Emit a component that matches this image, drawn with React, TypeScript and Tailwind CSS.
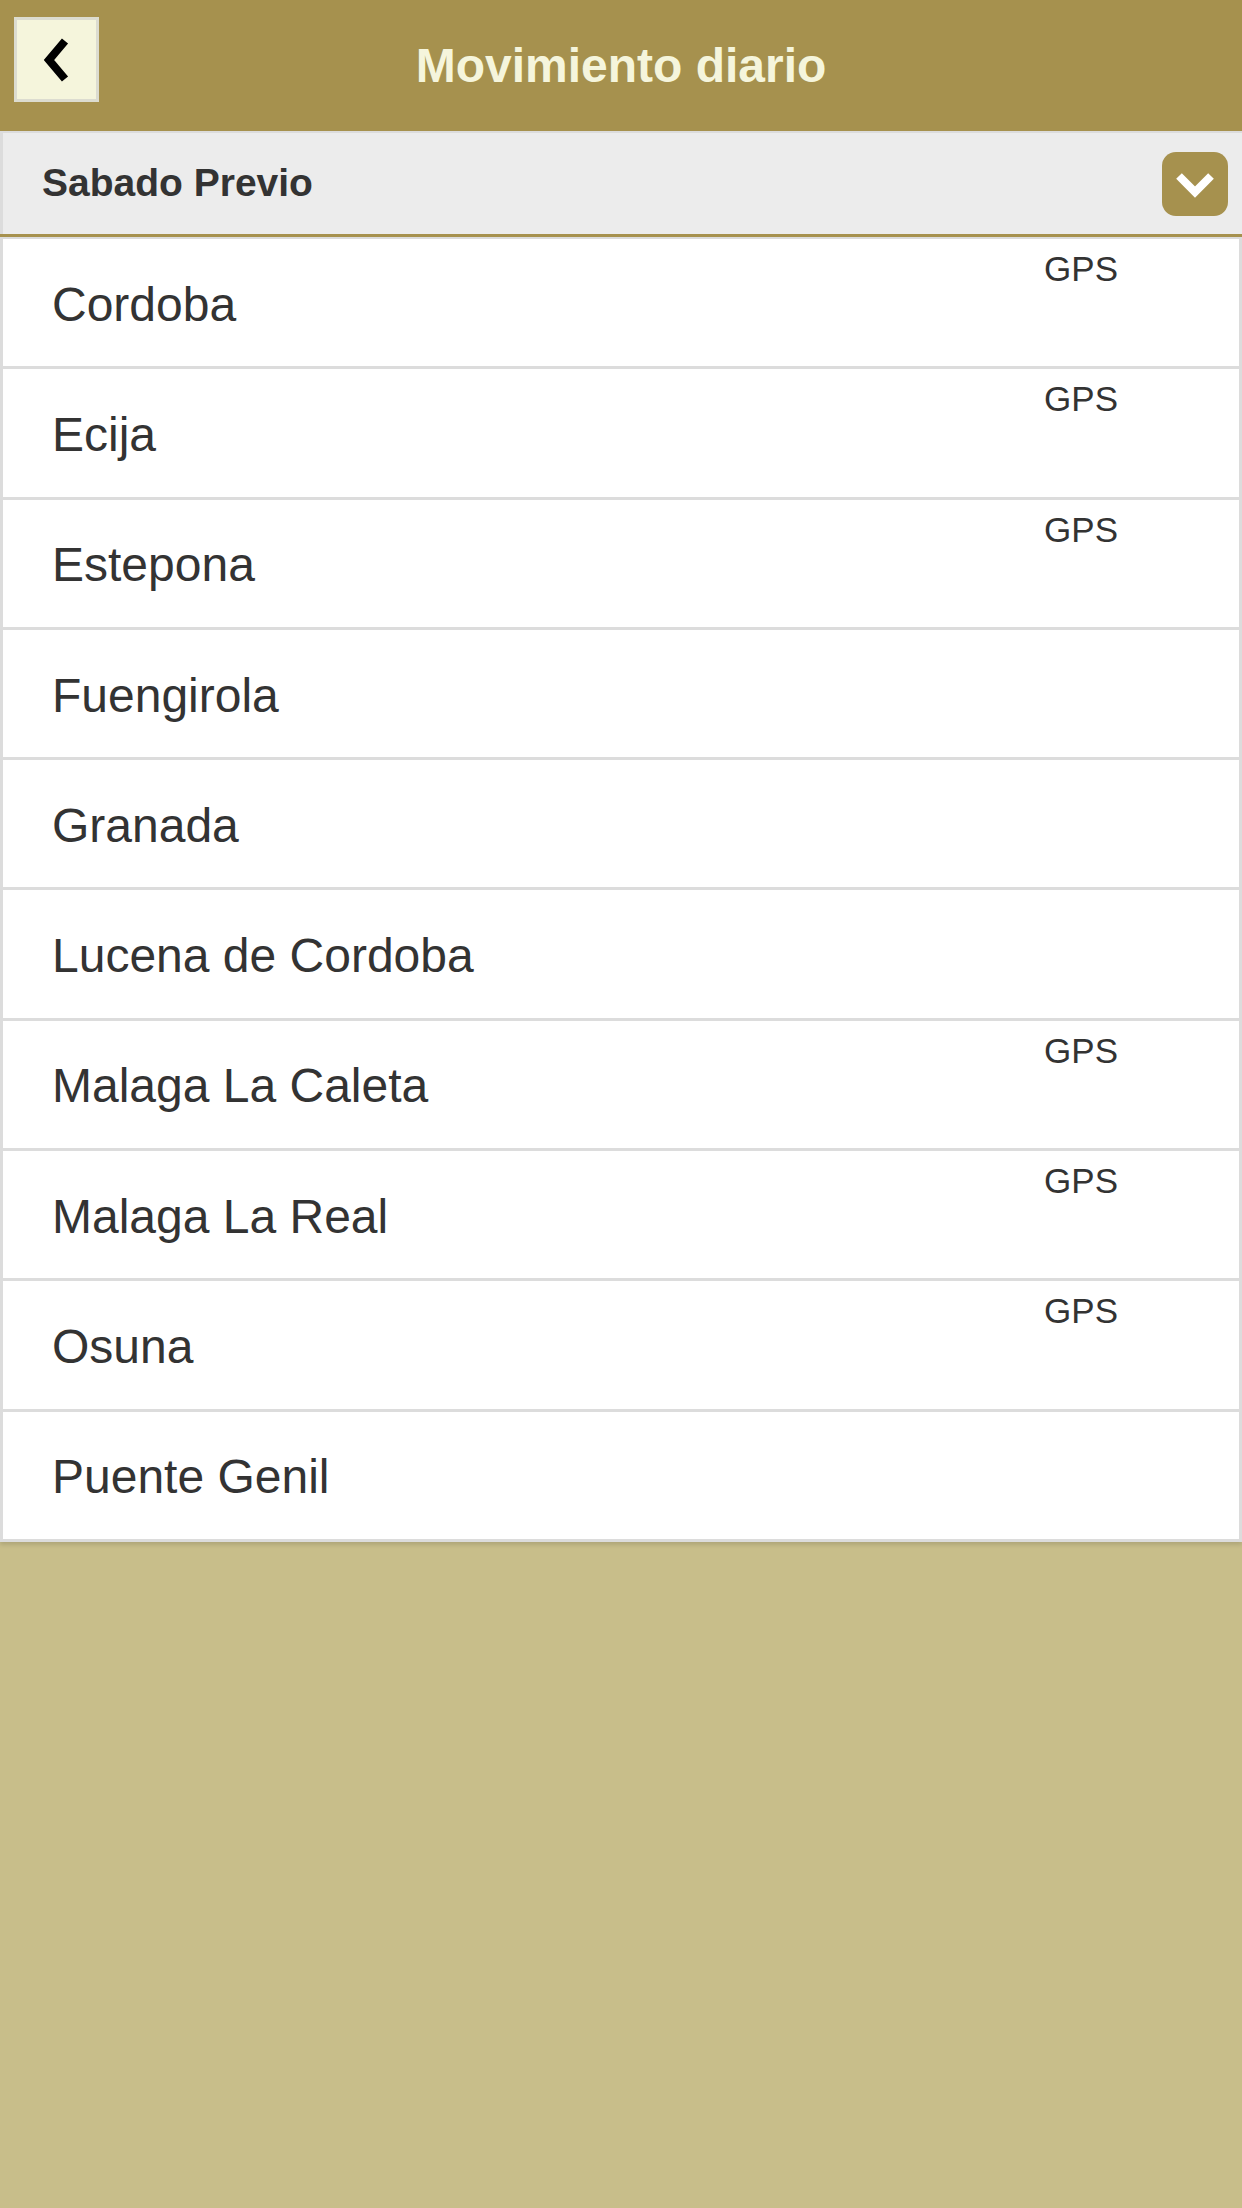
import React from "react";

const cities: { name: string; gps: boolean }[] = [
  { name: "Cordoba", gps: true },
  { name: "Ecija", gps: true },
  { name: "Estepona", gps: true },
  { name: "Fuengirola", gps: false },
  { name: "Granada", gps: false },
  { name: "Lucena de Cordoba", gps: false },
  { name: "Malaga La Caleta", gps: true },
  { name: "Malaga La Real", gps: true },
  { name: "Osuna", gps: true },
  { name: "Puente Genil", gps: false },
];

export default function App() {
  return (
    <div
      className="min-h-[2208px] w-[1242px] bg-[#c8be8a]"
      style={{ fontFamily: '"Liberation Sans", Arial, sans-serif' }}
    >
      <header className="relative flex h-[131px] items-center justify-center bg-[#a6914e]">
        <button className="absolute left-[14px] top-[17px] flex h-[85px] w-[85px] items-center justify-center border-[3px] border-[#dcdcd0] bg-[#f5f5dc]">
          <svg width="42" height="48" viewBox="0 0 42 48">
            <polyline
              points="29,5 13,24 29,43"
              fill="none"
              stroke="#000"
              strokeWidth="8"
              strokeLinecap="butt"
              strokeLinejoin="miter"
            />
          </svg>
        </button>
        <h1 className="text-[48px] font-bold leading-none text-[#f5f5dc]">Movimiento diario</h1>
      </header>
      <div className="h-[2px] bg-[#dcdcdc]" />
      <div className="flex h-[101px] items-center justify-between border-l-[3px] border-[#dcdcdc] bg-[#ececec] pl-[39px] pr-[14px]">
        <span className="text-[39px] font-bold text-[#333333]">Sabado Previo</span>
        <div className="flex h-[64px] w-[66px] items-center justify-center rounded-[14px] bg-[#a6914e]">
          <svg width="40" height="28" viewBox="0 0 40 28">
            <polyline
              points="4,6 20,22 36,6"
              fill="none"
              stroke="#fff"
              strokeWidth="8"
              strokeLinecap="butt"
              strokeLinejoin="miter"
            />
          </svg>
        </div>
      </div>
      <div className="h-[3px] bg-[#a6914e]" />
      <div className="h-[2px] bg-[#dcdcdc]" />
      <ul className="border-x-[3px] border-[#dcdcdc] bg-white shadow-[0_3px_4px_rgba(0,0,0,0.12)]">
        {cities.map((c) => (
          <li
            key={c.name}
            className="relative flex h-[130.3px] items-center border-b-[3px] border-[#dcdcdc] pl-[49px] pt-[4px]"
          >
            <span className="text-[48px] text-[#333333]">{c.name}</span>
            {c.gps && (
              <span className="absolute right-[121px] top-[12px] text-[35px] leading-none text-[#333333]">
                GPS
              </span>
            )}
          </li>
        ))}
      </ul>
    </div>
  );
}
